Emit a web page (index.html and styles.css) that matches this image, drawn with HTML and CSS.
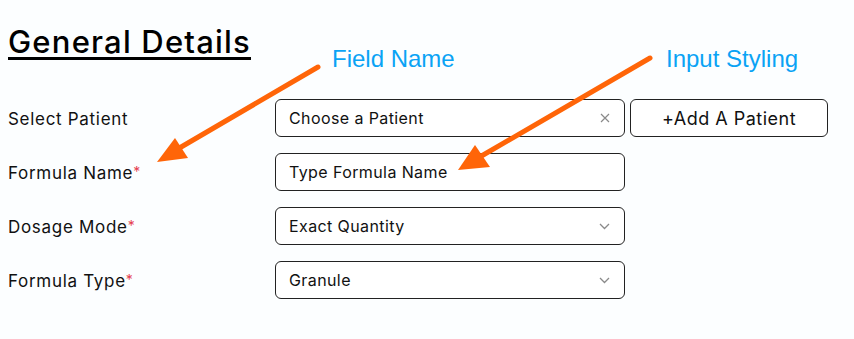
FILE: index.html
```html
<!DOCTYPE html>
<html lang="en">
<head>
<meta charset="utf-8">
<title>General Details</title>
<link rel="stylesheet" href="styles.css">
</head>
<body>
<div class="page">
  <h2 class="title">General Details</h2>
  <div class="form">
    <div class="label">Select Patient</div>
    <div class="field">
      <span class="value">Choose a Patient</span>
      <svg class="icon" width="10" height="10" viewBox="0 0 10 10"><path d="M1 1L9 9M9 1L1 9" stroke="#8a8a8a" stroke-width="1.2" fill="none"/></svg>
    </div>
    <button class="btn">+Add A Patient</button>

    <div class="label">Formula Name<span class="req">*</span></div>
    <div class="field"><span class="value">Type Formula Name</span></div>
    <div></div>

    <div class="label">Dosage Mode<span class="req">*</span></div>
    <div class="field">
      <span class="value">Exact Quantity</span>
      <svg class="icon" width="11" height="7" viewBox="0 0 11 7"><path d="M1 1L5.5 5.5L10 1" stroke="#8a8a8a" stroke-width="1.3" fill="none"/></svg>
    </div>
    <div></div>

    <div class="label">Formula Type<span class="req">*</span></div>
    <div class="field">
      <span class="value">Granule</span>
      <svg class="icon" width="11" height="7" viewBox="0 0 11 7"><path d="M1 1L5.5 5.5L10 1" stroke="#8a8a8a" stroke-width="1.3" fill="none"/></svg>
    </div>
    <div></div>
  </div>
</div>

<div class="note note-field">Field Name</div>
<div class="note note-input">Input Styling</div>
<svg class="arrows" width="854" height="339" viewBox="0 0 854 339">
  <line x1="318" y1="67" x2="176" y2="150" stroke="#ff6508" stroke-width="5" stroke-linecap="round"/>
  <polygon points="157,162 175,138 188,158" fill="#ff6508"/>
  <line x1="650" y1="58" x2="478" y2="158" stroke="#ff6508" stroke-width="5" stroke-linecap="round"/>
  <polygon points="458,170 475,145 490,167" fill="#ff6508"/>
</svg>
</body>
</html>
```
FILE: styles.css
```css
html, body {
  margin: 0;
  padding: 0;
  background: #fcfeff;
}
body {
  width: 854px;
  height: 339px;
  overflow: hidden;
  position: relative;
  font-family: "Inter", "Open Sans", sans-serif;
  color: #111;
}
.page {
  padding: 25px 0 0 8px;
}
.title {
  margin: 0;
  font-size: 31px;
  line-height: 34px;
  font-weight: 500;
  letter-spacing: 1.2px;
  text-decoration: underline;
  text-decoration-thickness: 3px;
  text-underline-offset: 4px;
  color: #000;
}
.form {
  margin-top: 40px;
  display: grid;
  grid-template-columns: 262px 350px 198px;
  grid-auto-rows: 38px;
  column-gap: 5px;
  row-gap: 16px;
  align-items: center;
}
.label {
  font-size: 17px;
  letter-spacing: 0.7px;
  color: #111;
  padding-top: 1px;
}
.req {
  color: #e5404f;
  font-size: 14px;
  vertical-align: 2px;
  letter-spacing: 0;
}
.field {
  box-sizing: border-box;
  height: 38px;
  border: 1px solid #222;
  border-radius: 6px;
  background: #fff;
  display: flex;
  align-items: center;
  justify-content: space-between;
  padding: 0 14px 0 13px;
}
.value {
  font-size: 16px;
  letter-spacing: 0.4px;
  color: #111;
}
.icon {
  display: block;
}
.btn {
  box-sizing: border-box;
  height: 38px;
  border: 1px solid #222;
  border-radius: 6px;
  background: #fff;
  font-family: inherit;
  font-size: 18px;
  letter-spacing: 0.5px;
  color: #111;
  padding: 0;
}
.note {
  position: absolute;
  top: 47px;
  font-family: "Liberation Sans", Arial, sans-serif;
  font-size: 24px;
  line-height: 24px;
  color: #0aa3f5;
}
.note-field { left: 332px; }
.note-input { left: 666px; }
.arrows {
  position: absolute;
  left: 0;
  top: 0;
}
```
